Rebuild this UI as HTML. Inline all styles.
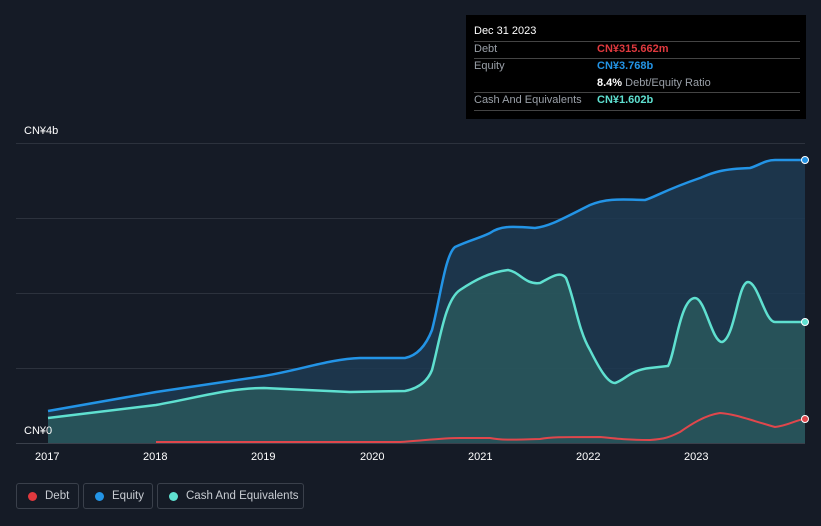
<!DOCTYPE html>
<html><head><meta charset="utf-8"><style>
body{margin:0;background:#151b26;width:821px;height:526px;overflow:hidden;font-family:"Liberation Sans",sans-serif;position:relative}
.tt{position:absolute;left:466px;top:15px;width:340px;height:104px;background:#000;color:#fff;font-size:11px}
.tt .r{position:absolute;left:8px;right:6px;height:17px;line-height:17px}
.ln{position:absolute;left:8px;right:6px;height:1px;background:#444}
.lab{color:#9aa0a8}
.v{position:absolute;left:123px;top:0}
.lg{position:absolute;top:483px;height:26px;border:1px solid #3a404b;border-radius:3px;color:#c8ccd2;font-size:11.5px;line-height:25px;box-sizing:border-box;white-space:nowrap}
.lg i{position:absolute;left:11px;top:8px;width:9px;height:9px;border-radius:50%}
.ax{position:absolute;color:#fff;font-size:11px}
</style></head><body>
<svg width="821" height="526" style="position:absolute;left:0;top:0">
<g stroke="#2c323d" stroke-width="1"><line x1="16" y1="143.5" x2="805" y2="143.5"/><line x1="16" y1="218.5" x2="805" y2="218.5"/><line x1="16" y1="293.5" x2="805" y2="293.5"/><line x1="16" y1="368.5" x2="805" y2="368.5"/></g>
<path d="M48,411 L156,392 L264,376 C300,370 330,359 360,358 L405,358 C415,356 425,348 432,330 C440,300 445,255 455,247 C470,240 480,238 490,233 C500,226 510,226 535,228 C550,226 560,220 590,205 C605,199 615,199 645,200 C655,197 665,190 700,178 C712,173 720,169 750,168 C760,165 765,160 775,160 L805,160 L805,443 L48,443 Z" fill="#1d3a52" opacity="0.85"/>
<path d="M48,418 L156,405 C200,397 230,388 264,388 L350,392 L405,391 C420,388 428,380 432,370 C440,340 445,300 460,290 C475,280 490,272 508,270 C520,272 525,285 540,283 C550,278 560,270 566,278 C575,300 578,330 590,350 C600,370 608,383 615,383 C625,380 630,370 650,368 L668,366 C675,355 680,298 695,298 C705,298 712,342 722,342 C735,338 738,282 748,282 C758,282 765,322 775,322 L805,322 L805,443 L48,443 Z" fill="#2a5a5c" opacity="0.8"/>
<path d="M48,411 L156,392 L264,376 C300,370 330,359 360,358 L405,358 C415,356 425,348 432,330 C440,300 445,255 455,247 C470,240 480,238 490,233 C500,226 510,226 535,228 C550,226 560,220 590,205 C605,199 615,199 645,200 C655,197 665,190 700,178 C712,173 720,169 750,168 C760,165 765,160 775,160 L805,160" fill="none" stroke="#2394e6" stroke-width="2.5"/>
<path d="M48,418 L156,405 C200,397 230,388 264,388 L350,392 L405,391 C420,388 428,380 432,370 C440,340 445,300 460,290 C475,280 490,272 508,270 C520,272 525,285 540,283 C550,278 560,270 566,278 C575,300 578,330 590,350 C600,370 608,383 615,383 C625,380 630,370 650,368 L668,366 C675,355 680,298 695,298 C705,298 712,342 722,342 C735,338 738,282 748,282 C758,282 765,322 775,322 L805,322" fill="none" stroke="#5fe0d0" stroke-width="2.5"/>
<path d="M156,442 L400,442 C420,441 440,438 460,438 L490,438 C500,440 510,440 540,439 C550,437 560,437 600,437 C620,439 630,440 650,440 C665,439 670,437 680,432 C690,425 705,415 720,413 C735,414 750,420 775,427 C790,425 795,420 805,419" fill="none" stroke="#e0474c" stroke-width="2"/>
<line x1="16" y1="443.5" x2="805" y2="443.5" stroke="#3a404b"/>
<circle cx="805" cy="160" r="3.5" fill="#2394e6" stroke="#fff" stroke-width="1"/>
<circle cx="805" cy="322" r="3.5" fill="#5fe0d0" stroke="#fff" stroke-width="1"/>
<circle cx="805" cy="419" r="3.5" fill="#e0474c" stroke="#fff" stroke-width="1"/>
</svg>
<div class="ax" style="left:24px;top:125px">CN¥4b</div>
<div class="ax" style="left:24px;top:425px">CN¥0</div>
<div class="ax" style="left:35px;top:451px">2017</div>
<div class="ax" style="left:143px;top:451px">2018</div>
<div class="ax" style="left:251px;top:451px">2019</div>
<div class="ax" style="left:360px;top:451px">2020</div>
<div class="ax" style="left:468px;top:451px">2021</div>
<div class="ax" style="left:576px;top:451px">2022</div>
<div class="ax" style="left:684px;top:451px">2023</div>
<div class="tt">
<div style="position:absolute;left:8px;top:10px">Dec 31 2023</div>
<div class="ln" style="top:26px"></div>
<div class="r" style="top:26px"><span class="lab">Debt</span><span class="v" style="color:#e0393e;font-weight:bold">CN¥315.662m</span></div>
<div class="ln" style="top:43px"></div>
<div class="r" style="top:43px"><span class="lab">Equity</span><span class="v" style="color:#2394e6;font-weight:bold">CN¥3.768b</span></div>
<div class="r" style="top:60px;left:131px"><span style="font-weight:bold">8.4%</span> <span class="lab">Debt/Equity Ratio</span></div>
<div class="ln" style="top:77px"></div>
<div class="r" style="top:77px"><span class="lab">Cash And Equivalents</span><span class="v" style="color:#5fe0d0;font-weight:bold">CN¥1.602b</span></div>
<div class="ln" style="top:95px"></div>
</div>
<div class="lg" style="left:16px;width:63px"><i style="background:#e0393e"></i><span style="position:absolute;left:28px">Debt</span></div>
<div class="lg" style="left:83px;width:70px"><i style="background:#2394e6"></i><span style="position:absolute;left:28px">Equity</span></div>
<div class="lg" style="left:157px;width:147px"><i style="background:#5fe0d0"></i><span style="position:absolute;left:28px">Cash And Equivalents</span></div>
</body></html>
